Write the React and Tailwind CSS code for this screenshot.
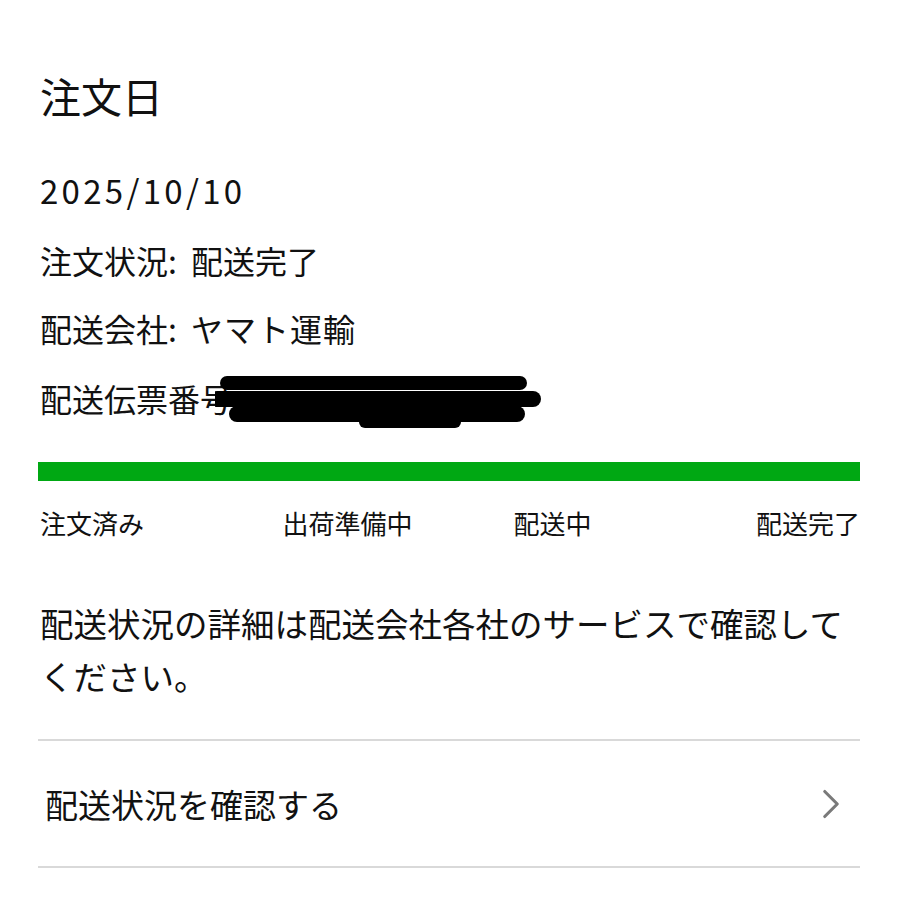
import { ChevronRight } from "lucide-react";

const steps = [
  { label: "注文済み", align: "text-left" },
  { label: "出荷準備中", align: "text-center" },
  { label: "配送中", align: "text-center" },
  { label: "配送完了", align: "text-right" },
];

function Redaction() {
  return (
    <svg
      className="absolute left-[175px] top-[-5px]"
      width="330"
      height="60"
      viewBox="0 0 330 60"
    >
      <g stroke="#000" strokeLinecap="round" fill="none">
        <path d="M12 10 L305 10" strokeWidth="14" />
        <path d="M2 26 L318 26" strokeWidth="16" />
        <path d="M22 41 L302 41" strokeWidth="16" />
        <path d="M150 49 L240 49" strokeWidth="12" />
      </g>
    </svg>
  );
}

export default function App() {
  return (
    <div
      className="min-h-screen bg-white px-[40px] pt-[71px] text-[#111]"
      style={{ fontFamily: '"Noto Sans CJK JP", "Noto Sans", sans-serif' }}
    >
      <h1 className="text-[41px] leading-[48px] font-normal">注文日</h1>

      <div className="mt-[51px] text-[33px] leading-[40px] tracking-[3.3px]">2025/10/10</div>

      <div className="mt-[30px] text-[32px] leading-[40px]">
        注文状況:<span className="ml-[14px]">配送完了</span>
      </div>
      <div className="mt-[28px] text-[32px] leading-[40px]">
        配送会社:<span className="ml-[14px] tracking-[1px]">ヤマト運輸</span>
      </div>
      <div className="relative mt-[30px] text-[32px] leading-[40px]">
        配送伝票番号
        <Redaction />
      </div>

      <div className="mt-[44px] -ml-[2px] h-[19px] bg-[#00a813]" />

      <div className="mt-[26px] grid grid-cols-4 text-[26px] leading-[32px]">
        {steps.map((s) => (
          <span key={s.label} className={s.align}>
            {s.label}
          </span>
        ))}
      </div>

      <p className="mt-[57px] text-[33.5px] leading-[53px]">
        配送状況の詳細は配送会社各社のサービスで確認してください。
      </p>

      <div className="mt-[37px] -ml-[2px] h-[2px] bg-[#d9d9d9]" />
      <button className="flex h-[125px] w-full items-center justify-between pl-[5px] pr-[4px] text-left">
        <span className="text-[33px] leading-[40px]">配送状況を確認する</span>
        <ChevronRight size={50} strokeWidth={1.5} className="text-[#7a7a7a]" />
      </button>
      <div className="-ml-[2px] h-[2px] bg-[#d9d9d9]" />
    </div>
  );
}
